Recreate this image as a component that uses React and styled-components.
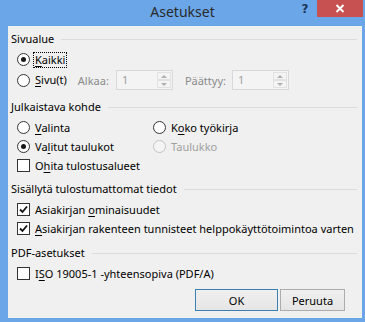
import React from "react";
import styled, { createGlobalStyle } from "styled-components";

const GlobalStyle = createGlobalStyle`
  html, body {
    margin: 0;
    padding: 0;
  }
  body {
    font-family: "Noto Sans", "Open Sans", sans-serif;
    font-size: 11px;
    color: #000;
  }
`;

const Frame = styled.div`
  width: 365px;
  height: 322px;
  background: #6ba7e8;
  display: flex;
  flex-direction: column;
`;

const TitleBar = styled.div`
  height: 26px;
  display: grid;
  grid-template-columns: 1fr auto 1fr;
  align-items: start;
`;

const Title = styled.div`
  grid-column: 2;
  font-size: 14px;
  line-height: 24px;
  color: #2a2a2a;
`;

const Controls = styled.div`
  grid-column: 3;
  justify-self: end;
  display: flex;
  margin-right: 2px;
`;

const HelpButton = styled.div`
  width: 24px;
  height: 17px;
  display: flex;
  align-items: center;
  justify-content: center;
  font-family: "DejaVu Sans", sans-serif;
  font-weight: bold;
  font-size: 12px;
  color: #1d3557;
`;

const CloseButton = styled.div`
  width: 46px;
  height: 17px;
  background: #c75050;
  color: #fff;
  display: flex;
  align-items: center;
  justify-content: center;
`;

const Client = styled.div`
  flex: 1;
  margin: 0 3px 4px 8px;
  background: #f0f0f0;
  padding: 5px 5px 7px 3px;
  display: flex;
  flex-direction: column;
`;

const Section = styled.div`
  margin-top: ${({ $top }) => $top || 0}px;
`;

const Heading = styled.div`
  display: flex;
  align-items: center;
  height: 16px;
  line-height: 16px;
  white-space: nowrap;

  &::after {
    content: "";
    flex: 1;
    height: 1px;
    background: #dcdcdc;
    margin-left: 7px;
  }
`;

const Items = styled.div`
  padding: 3px 0 0 6px;
`;

const Row = styled.div`
  display: flex;
  align-items: center;
  height: ${({ $h }) => $h || 19}px;
  white-space: nowrap;
`;

const TwoCols = styled.div`
  display: grid;
  grid-template-columns: 136px auto;
`;

const RadioCircle = styled.span`
  width: 13px;
  height: 13px;
  box-sizing: border-box;
  border-radius: 50%;
  border: 1px solid ${({ $disabled }) => ($disabled ? "#c4c4c4" : "#333")};
  background: ${({ $disabled }) => ($disabled ? "#f4f4f4" : "#fff")};
  display: inline-flex;
  align-items: center;
  justify-content: center;
  flex-shrink: 0;
  margin-right: 4px;

  &::after {
    content: "";
    display: ${({ $checked }) => ($checked ? "block" : "none")};
    width: 5px;
    height: 5px;
    border-radius: 50%;
    background: #1a1a1a;
  }
`;

const Box = styled.span`
  width: 13px;
  height: 13px;
  box-sizing: border-box;
  border: 1px solid #333;
  background: #fff;
  display: inline-flex;
  align-items: center;
  justify-content: center;
  flex-shrink: 0;
  margin-right: 4px;
`;

const Label = styled.span`
  color: ${({ $disabled }) => ($disabled ? "#a0a0a0" : "#000")};
  line-height: 14px;
  padding: 0 1px;
  outline: ${({ $focus }) => ($focus ? "1px dotted #000" : "none")};
`;

const Key = styled.u`
  text-decoration-thickness: 1px;
  text-underline-offset: 2px;
`;

const Caption = styled.span`
  color: #8a8a8a;
  margin-left: ${({ $ml }) => $ml}px;
  margin-right: ${({ $mr }) => $mr}px;
`;

const Spin = styled.div`
  width: 57px;
  height: 20px;
  box-sizing: border-box;
  border: 1px solid #d9d9d9;
  background: #f4f4f4;
  display: flex;
`;

const SpinValue = styled.div`
  flex: 1;
  color: #a0a0a0;
  padding-left: 5px;
  line-height: 18px;
`;

const SpinArrows = styled.div`
  width: 14px;
  display: flex;
  flex-direction: column;
  padding: 1px;
`;

const Arrow = styled.div`
  flex: 1;
  border: 1px solid #e2e2e2;
  display: flex;
  align-items: center;
  justify-content: center;

  &::after {
    content: "";
    border-left: 3px solid transparent;
    border-right: 3px solid transparent;
    ${({ $up }) =>
      $up ? "border-bottom: 3px solid #b0b0b0;" : "border-top: 3px solid #b0b0b0;"}
  }
`;

const Buttons = styled.div`
  display: flex;
  justify-content: flex-end;
  gap: 2px;
  margin-top: 6px;
  padding-right: 12px;
`;

const Button = styled.div`
  width: ${({ $w }) => $w}px;
  height: 22px;
  box-sizing: border-box;
  border: 1px solid ${({ $primary }) => ($primary ? "#3c7fb1" : "#acacac")};
  background: linear-gradient(#f0f0f0, #e5e5e5);
  display: flex;
  align-items: center;
  justify-content: center;
`;

const Radio = ({ checked, disabled, focus, children }) => (
  <Row>
    <RadioCircle $checked={checked} $disabled={disabled} />
    <Label $disabled={disabled} $focus={focus}>
      {children}
    </Label>
  </Row>
);

const Check = ({ checked, children }) => (
  <Row>
    <Box>
      {checked && (
        <svg width="9" height="9" viewBox="0 0 9 9">
          <path d="M1 4.5 L3.5 7 L8 1.5" fill="none" stroke="#111" strokeWidth="1.8" />
        </svg>
      )}
    </Box>
    <Label>{children}</Label>
  </Row>
);

const SpinBox = () => (
  <Spin>
    <SpinValue>1</SpinValue>
    <SpinArrows>
      <Arrow $up />
      <Arrow />
    </SpinArrows>
  </Spin>
);

export default function App() {
  return (
    <Frame>
      <GlobalStyle />
      <TitleBar>
        <Title>Asetukset</Title>
        <Controls>
          <HelpButton>?</HelpButton>
          <CloseButton>
            <svg width="10" height="9" viewBox="0 0 10 9">
              <path d="M1.5 1 L8.5 8 M8.5 1 L1.5 8" stroke="#fff" strokeWidth="2" />
            </svg>
          </CloseButton>
        </Controls>
      </TitleBar>

      <Client>
        <Section>
          <Heading>Sivualue</Heading>
          <Items>
            <Radio checked focus>
              <Key>K</Key>aikki
            </Radio>
            <Row $h={22}>
              <RadioCircle />
              <Label>
                <Key>S</Key>ivu(t)
              </Label>
              <Caption $ml={10} $mr={7}>Alkaa:</Caption>
              <SpinBox />
              <Caption $ml={12} $mr={6}>Päättyy:</Caption>
              <SpinBox />
            </Row>
          </Items>
        </Section>

        <Section $top={8}>
          <Heading>Julkaistava kohde</Heading>
          <Items>
            <TwoCols>
              <Radio>
                <Key>V</Key>alinta
              </Radio>
              <Radio>
                K<Key>o</Key>ko työkirja
              </Radio>
              <Radio checked>
                Va<Key>l</Key>itut taulukot
              </Radio>
              <Radio disabled>Taulukko</Radio>
            </TwoCols>
            <Check>
              O<Key>h</Key>ita tulostusalueet
            </Check>
          </Items>
        </Section>

        <Section $top={6}>
          <Heading>Sisällytä tulostumattomat tiedot</Heading>
          <Items>
            <Check checked>
              Asiakirjan <Key>o</Key>minaisuudet
            </Check>
            <Check checked>
              <Key>A</Key>siakirjan rakenteen tunnisteet helppokäyttötoimintoa varten
            </Check>
          </Items>
        </Section>

        <Section $top={7}>
          <Heading>PDF-asetukset</Heading>
          <Items>
            <Check>
              I<Key>S</Key>O 19005-1 -yhteensopiva (PDF/A)
            </Check>
          </Items>
        </Section>

        <Buttons>
          <Button $w={83} $primary>OK</Button>
          <Button $w={65}>Peruuta</Button>
        </Buttons>
      </Client>
    </Frame>
  );
}
